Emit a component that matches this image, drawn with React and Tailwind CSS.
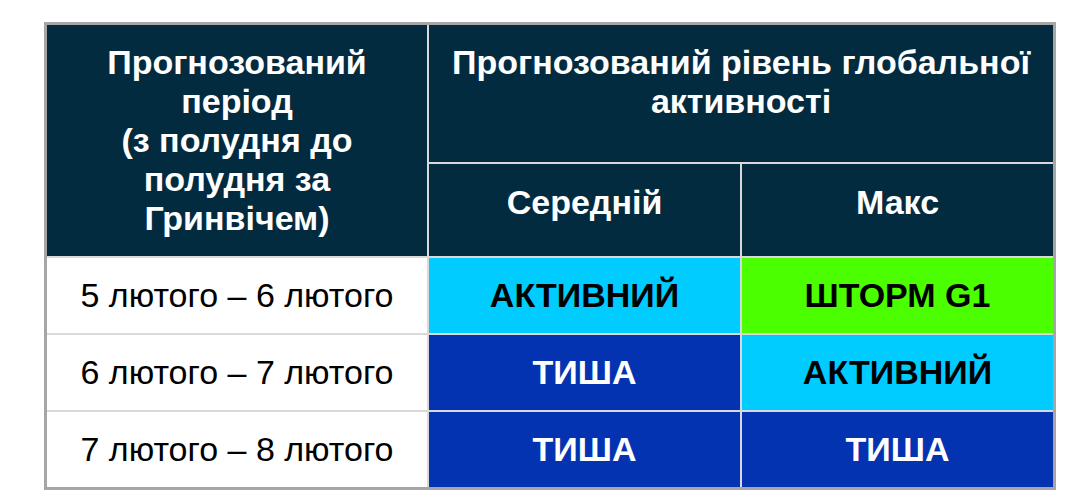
import React from 'react';

const rows = [
  { period: '5 лютого – 6 лютого', avg: 'АКТИВНИЙ', max: 'ШТОРМ G1' },
  { period: '6 лютого – 7 лютого', avg: 'ТИША', max: 'АКТИВНИЙ' },
  { period: '7 лютого – 8 лютого', avg: 'ТИША', max: 'ТИША' },
];

const levelCls = {
  'АКТИВНИЙ': 'bg-[#00ccff] text-black',
  'ТИША': 'bg-[#0433b2] text-white',
  'ШТОРМ G1': 'bg-[#4cff00] text-black',
};

export default function App() {
  const head = 'bg-[#032b40] text-white font-bold text-[34px] leading-[39px] flex items-center justify-center text-center';
  const cell = 'flex items-center justify-center text-[34px] leading-[39px]';

  return (
    <div
      className="min-h-screen bg-white pt-[22px] pl-[44px]"
      style={{ fontFamily: '"Liberation Sans", Arial, sans-serif' }}
    >
      <div className="inline-grid grid-cols-[380px_311px_311px] grid-rows-[137px_92px_75px_75px_75px] gap-[2px] bg-[#d9d9d9] border-[3px] border-[#a6a6a6]">
        <div className={`${head} row-span-2`}>
          <div>
            Прогнозований
            <br />
            період
            <br />
            (з полудня до
            <br />
            полудня за
            <br />
            Гринвічем)
          </div>
        </div>
        <div className={`${head} col-span-2 pb-[24px]`}>
          <div>
            Прогнозований рівень глобальної
            <br />
            активності
          </div>
        </div>
        <div className={`${head} pb-[16px]`}>Середній</div>
        <div className={`${head} pb-[16px]`}>Макс</div>

        {rows.map((r) => (
          <React.Fragment key={r.period}>
            <div className={`${cell} bg-white text-black`}>{r.period}</div>
            <div className={`${cell} font-bold ${levelCls[r.avg]}`}>{r.avg}</div>
            <div className={`${cell} font-bold ${levelCls[r.max]}`}>{r.max}</div>
          </React.Fragment>
        ))}
      </div>
    </div>
  );
}
